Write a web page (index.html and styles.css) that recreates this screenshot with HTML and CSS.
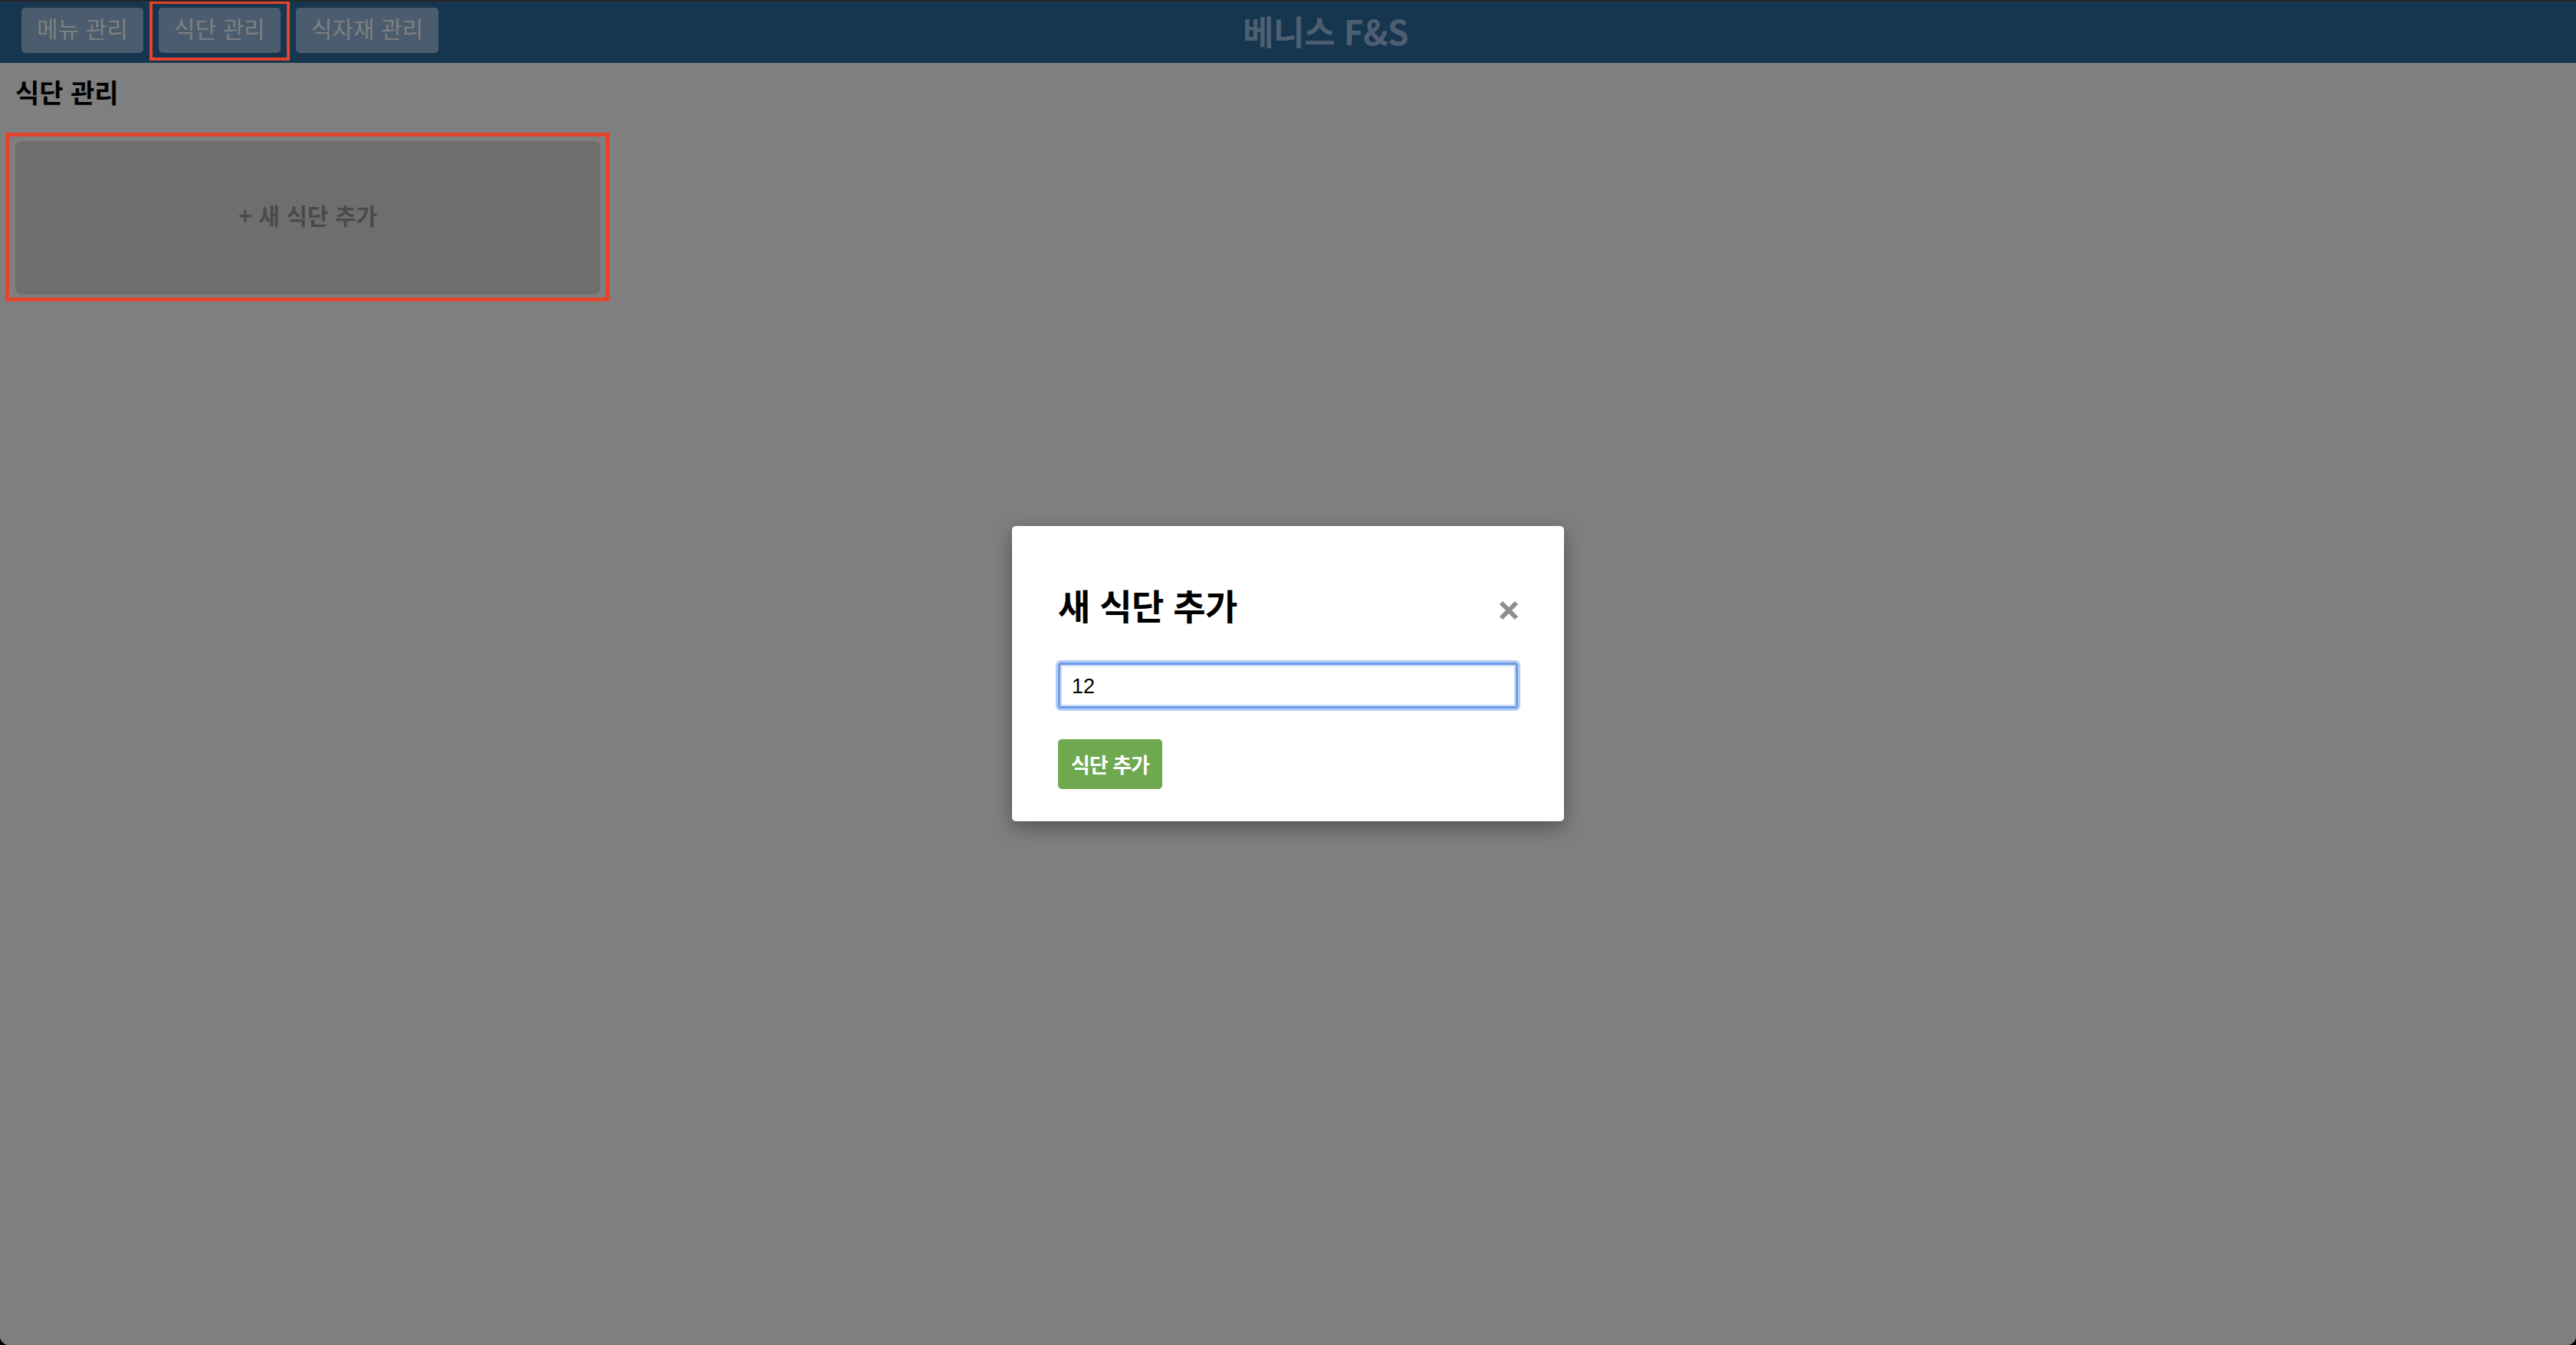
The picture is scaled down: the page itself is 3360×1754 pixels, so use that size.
FILE: index.html
```html
<!DOCTYPE html>
<html lang="ko">
<head>
<meta charset="utf-8">
<title>베니스 F&amp;S - 식단 관리</title>
<link rel="stylesheet" href="styles.css">
</head>
<body>
<div class="window">
  <header class="topbar">
    <nav class="nav">
      <button class="nav-btn">메뉴 관리</button>
      <button class="nav-btn">식단 관리</button>
      <button class="nav-btn">식자재 관리</button>
    </nav>
    <h1 class="brand">베니스 F&amp;S</h1>
  </header>

  <main class="content">
    <h2 class="page-title">식단 관리</h2>
    <div class="card-grid">
      <button class="add-card">+ 새 식단 추가</button>
    </div>
  </main>

  <div class="backdrop">
    <div class="modal">
      <div class="modal-head">
        <h3 class="modal-title">새 식단 추가</h3>
        <button class="modal-close" aria-label="닫기">
          <svg width="26" height="26" viewBox="0 0 26 26"><path d="M3 3 L23 23 M23 3 L3 23" stroke="#8f8f8f" stroke-width="6" stroke-linecap="butt" fill="none"/></svg>
        </button>
      </div>
      <input class="modal-input" type="text" value="12">
      <button class="modal-submit">식단 추가</button>
    </div>
  </div>

  <div class="mark mark-nav"></div>
  <div class="mark mark-card"></div>
</div>
</body>
</html>
```

FILE: styles.css
```css
* { box-sizing: border-box; }

html, body {
  margin: 0;
  padding: 0;
  background: #000;
}

body {
  font-family: "Noto Sans CJK KR", "Noto Sans", sans-serif;
}

.window {
  position: relative;
  height: 1754px;
  border-top: 2px solid #262626;
  background: #fff;
  border-radius: 0 0 12px 12px;
  overflow: hidden;
}

.topbar {
  height: 80px;
  background: #2c6a9e;
  display: flex;
  align-items: flex-start;
  padding: 8px 28px 0;
}

.nav {
  display: flex;
  gap: 20px;
}

.nav-btn {
  height: 59px;
  padding: 0 20px 6px;
  border: none;
  border-radius: 5px;
  background: #94b8dc;
  color: #fff;
  font-family: inherit;
  font-size: 30px;
  line-height: 53px;
  cursor: pointer;
}

.brand {
  margin: -8px 0 0 1049px;
  height: 76px;
  display: flex;
  align-items: center;
  font-size: 44px;
  font-weight: 700;
  color: #9abee0;
  letter-spacing: -0.5px;
}

.content {
  padding: 18px 20px 0;
}

.page-title {
  margin: 0;
  font-size: 34px;
  line-height: 40px;
  font-weight: 700;
  color: #000;
}

.card-grid {
  margin-top: 44px;
  display: flex;
}

.add-card {
  width: 763px;
  height: 200px;
  border: none;
  border-radius: 8px;
  background: #dcdcdc;
  color: #949494;
  font-family: inherit;
  font-size: 30px;
  font-weight: 700;
  padding: 0 0 8px;
  cursor: pointer;
}

.backdrop {
  position: absolute;
  inset: 0;
  background: rgba(0, 0, 0, 0.5);
  display: flex;
  align-items: center;
  justify-content: center;
}

.modal {
  width: 720px;
  height: 385px;
  background: #fff;
  border-radius: 5px;
  box-shadow: 0 8px 26px rgba(0, 0, 0, 0.35);
  padding: 75px 60px 40px;
  display: flex;
  flex-direction: column;
  align-items: flex-start;
}

.modal-head {
  width: 100%;
  display: flex;
  align-items: center;
  justify-content: space-between;
}

.modal-title {
  margin: 0;
  font-size: 46px;
  line-height: 55px;
  font-weight: 700;
  letter-spacing: -0.5px;
  color: #000;
}

.modal-close {
  border: none;
  background: none;
  padding: 0;
  margin: 16px -1px 0 0;
  width: 26px;
  height: 26px;
  display: flex;
  cursor: pointer;
}

.modal-input {
  margin-top: 48px;
  width: 600px;
  height: 60px;
  border: 3px solid #6d9cea;
  border-radius: 4px;
  box-shadow: inset 0 0 0 2px #c8d9f6, 0 0 0 3px #b6cdf4;
  padding: 4px 15px 0;
  font-family: "Liberation Sans", Arial, sans-serif;
  font-size: 27px;
  color: #000;
  outline: none;
}

.modal-submit {
  margin-top: 40px;
  width: 136px;
  height: 65px;
  border: none;
  border-radius: 5px;
  background: #6ea84f;
  color: #fff;
  font-family: inherit;
  font-size: 27px;
  font-weight: 700;
  letter-spacing: -1px;
  padding: 0;
  cursor: pointer;
}

.mark {
  position: absolute;
  border-style: solid;
  border-color: #e5432b;
  pointer-events: none;
}

.mark-nav {
  left: 195px;
  top: -1px;
  width: 183px;
  height: 78px;
  border-width: 4px;
}

.mark-card {
  left: 7px;
  top: 171px;
  width: 788px;
  height: 220px;
  border-width: 5px;
}
```
